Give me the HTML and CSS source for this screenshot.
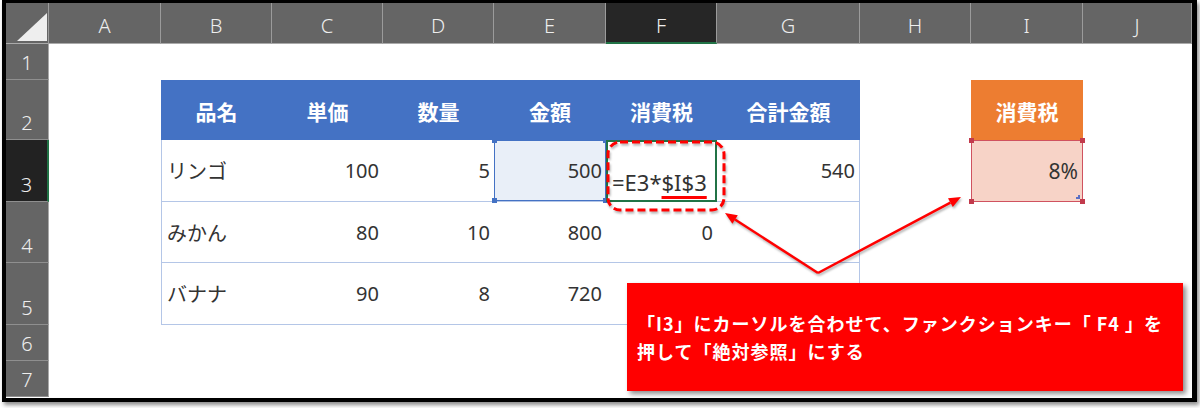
FILE: index.html
```html
<!DOCTYPE html>
<html lang="ja">
<head>
<meta charset="utf-8">
<title>絶対参照</title>
<link rel="stylesheet" href="styles.css">
</head>
<body>
<div class="page">
  <div class="frame">
    <div class="sheet">
      <div class="ch corner"><svg width="42" height="40" viewBox="0 0 42 40"><polygon points="11,38 41,38 41,10" fill="#eeeeee"/></svg></div>
      <div class="ch">A</div>
      <div class="ch">B</div>
      <div class="ch">C</div>
      <div class="ch">D</div>
      <div class="ch">E</div>
      <div class="ch sel">F</div>
      <div class="ch">G</div>
      <div class="ch">H</div>
      <div class="ch">I</div>
      <div class="ch">J</div>

      <div class="rh">1</div>
      <div class="rh">2</div>
      <div class="rh sel">3</div>
      <div class="rh">4</div>
      <div class="rh">5</div>
      <div class="rh">6</div>
      <div class="rh">7</div>

      <div class="tbl">
        <div class="th">品名</div>
        <div class="th">単価</div>
        <div class="th">数量</div>
        <div class="th">金額</div>
        <div class="th">消費税</div>
        <div class="th">合計金額</div>

        <div class="td name">リンゴ</div>
        <div class="td">100</div>
        <div class="td">5</div>
        <div class="td ref">500<span class="hd tl"></span><span class="hd tr"></span><span class="hd bl"></span><span class="hd br"></span></div>
        <div class="td edit">=E3*<span class="abs">$I$3</span></div>
        <div class="td last">540</div>

        <div class="td name">みかん</div>
        <div class="td">80</div>
        <div class="td">10</div>
        <div class="td">800</div>
        <div class="td">0</div>
        <div class="td last"></div>

        <div class="td name">バナナ</div>
        <div class="td">90</div>
        <div class="td">8</div>
        <div class="td">720</div>
        <div class="td"></div>
        <div class="td last"></div>
      </div>

      <div class="tax">
        <div class="tax-h">消費税</div>
        <div class="tax-v">8%<span class="hr tl"></span><span class="hr tr"></span><span class="hr bl"></span><span class="hr br"></span><span class="fill"></span></div>
      </div>
    </div>
  </div>

  <svg class="marks" width="1200" height="408" viewBox="0 0 1200 408">
    <g class="shadow">
      <rect x="608" y="142" width="116" height="68" rx="12" ry="12" fill="none" stroke="#ff0000" stroke-width="3" stroke-dasharray="8 4"/>
      <line x1="818" y1="273" x2="735" y2="219.5" stroke="#ff0000" stroke-width="2.5"/>
      <polygon points="725,213 737.8,215.3 732.4,223.7" fill="#ff0000"/>
      <line x1="818" y1="273" x2="950.4" y2="202.6" stroke="#ff0000" stroke-width="2.5"/>
      <polygon points="961,197 952.8,207 948,198.2" fill="#ff0000"/>
    </g>
  </svg>

  <div class="callout">
    <span class="line">「I3」にカーソルを合わせて、ファンクションキー「 F4 」を</span>
    <span class="line">押して「絶対参照」にする</span>
  </div>
</div>
</body>
</html>
```

FILE: styles.css
```css
* {
  box-sizing: border-box;
  margin: 0;
  padding: 0;
}

body {
  width: 1200px;
  height: 408px;
  overflow: hidden;
  background: #ffffff;
  font-family: "Noto Sans", "Noto Sans CJK JP", sans-serif;
}

.page {
  position: relative;
  width: 1200px;
  height: 408px;
}

.frame {
  margin-left: 2px;
  width: 1195px;
  height: 402px;
  border: 4px solid #000;
  border-top-width: 3px;
  border-right-width: 5px;
  background: #fff;
  box-shadow: 2px 3px 4px rgba(0, 0, 0, 0.45);
}

.sheet {
  display: grid;
  height: 100%;
  grid-template-columns: 43px 112px 111px 111px 111px 112px 111px 143px 111px 112px 1fr;
  grid-template-rows: 41px 36px 60px 62px 61px 62px 36px 36px 1fr;
}

/* column headers */
.ch {
  display: flex;
  align-items: center;
  justify-content: center;
  padding-top: 5px;
  background: #656565;
  border-right: 1px solid #9b9b9b;
  border-bottom: 1px solid #aaaaaa;
  color: #eeeeee;
  font-size: 20px;
  font-weight: 300;
}

.ch.corner {
  padding: 0;
  align-items: stretch;
  justify-content: flex-start;
}

.ch.sel {
  background: #262626;
  border-bottom: 2px solid #217346;
}

.ch:last-child {
  border-right: none;
}

/* row headers */
.rh {
  grid-column: 1;
  display: flex;
  align-items: flex-end;
  justify-content: center;
  padding-bottom: 4px;
  background: #656565;
  border-right: 1px solid #aaaaaa;
  border-bottom: 1px solid #8f8f8f;
  color: #eeeeee;
  font-size: 20px;
  line-height: 24px;
  font-weight: 300;
}

.rh.sel {
  background: #222222;
  border-right: 2px solid #217346;
}

/* main table B2:G5 */
.tbl {
  grid-column: 3 / 9;
  grid-row: 3 / 7;
  display: grid;
  grid-template-columns: 111px 111px 111px 112px 111px 143px;
  grid-template-rows: 60px 62px 61px 62px;
  color: #333333;
  font-size: 20px;
}

.th {
  display: flex;
  align-items: center;
  justify-content: center;
  padding-top: 1px;
  background: #4472c4;
  color: #ffffff;
  font-family: "Noto Sans CJK JP", sans-serif;
  font-weight: 700;
  font-size: 21px;
}

.td {
  position: relative;
  display: flex;
  align-items: center;
  justify-content: flex-end;
  padding-right: 4px;
  border-bottom: 1px solid #b4c6e7;
}

.td.name {
  justify-content: flex-start;
  padding-left: 5px;
  border-left: 1px solid #b4c6e7;
  font-family: "Noto Sans CJK JP", sans-serif;
}

.td.last {
  border-right: 1px solid #b4c6e7;
}

.td.ref {
  background: #e9eff8;
  box-shadow: inset 0 0 0 1px #4472c4;
}

.td.edit {
  justify-content: flex-start;
  align-items: flex-end;
  padding: 0 0 9px 6px;
  border-bottom: none;
  box-shadow: inset 0 0 0 2px #217346;
  font-size: 22px;
  line-height: 1;
}

.abs {
  text-decoration: underline;
  text-decoration-color: #ff0000;
  text-decoration-thickness: 3px;
  text-underline-offset: 5px;
}

.hd,
.hr {
  position: absolute;
  width: 5px;
  height: 5px;
  background: #4472c4;
}

.hr {
  background: #c23a4c;
}

.tl { left: -2px; top: -2px; }
.tr { right: -2px; top: -2px; }
.bl { left: -2px; bottom: -2px; }
.br { right: -2px; bottom: -2px; }

/* tax rate block I2:I3 */
.tax {
  grid-column: 10 / 11;
  grid-row: 3 / 5;
  display: grid;
  grid-template-rows: 60px 62px;
}

.tax-h {
  display: flex;
  align-items: center;
  justify-content: center;
  padding-top: 1px;
  background: #ed7d31;
  color: #ffffff;
  font-family: "Noto Sans CJK JP", sans-serif;
  font-weight: 700;
  font-size: 21px;
}

.tax-v {
  position: relative;
  display: flex;
  align-items: center;
  justify-content: flex-end;
  padding-right: 5px;
  background: #f7d3c7;
  box-shadow: inset 0 0 0 1px #d0525f;
  color: #333333;
  font-size: 21px;
}

.fill {
  position: absolute;
  right: 3px;
  bottom: 3px;
  width: 4px;
  height: 4px;
  border-right: 2px solid #5a6fc4;
  border-bottom: 2px solid #5a6fc4;
}

/* annotations */
.marks {
  position: absolute;
  left: 0;
  top: 0;
  pointer-events: none;
}

.shadow {
  filter: drop-shadow(1px 2px 1px rgba(0, 0, 0, 0.3));
}

.callout {
  position: absolute;
  left: 627px;
  top: 283px;
  width: 556px;
  height: 108px;
  display: flex;
  flex-direction: column;
  justify-content: center;
  padding: 0 10px;
  background: #ff0000;
  box-shadow: 3px 3px 5px rgba(0, 0, 0, 0.45);
  color: #ffffff;
  font-family: "Noto Sans CJK JP", sans-serif;
  font-weight: 700;
  font-size: 18px;
  line-height: 28px;
  letter-spacing: 1px;
}

.callout .line {
  white-space: nowrap;
}
```
